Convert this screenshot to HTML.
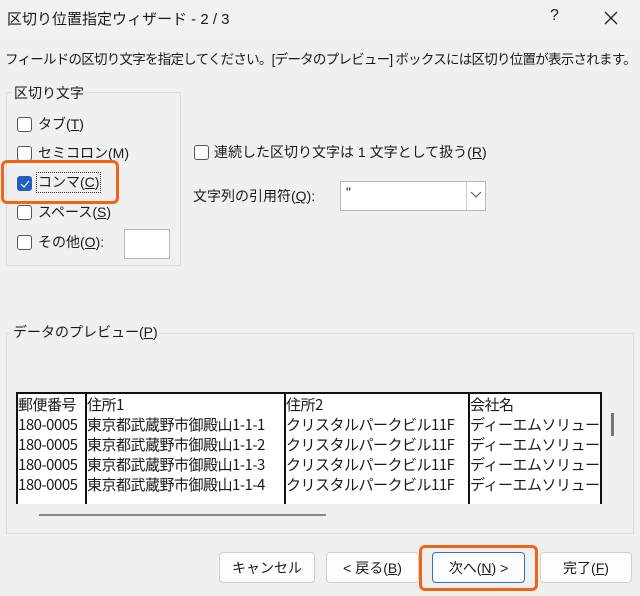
<!DOCTYPE html>
<html><head><meta charset="utf-8"><style>
body{margin:0;width:640px;height:596px;background:#f0f0f0;font-family:"Liberation Sans","Noto Sans CJK JP",sans-serif;font-size:14px;color:#1a1a1a;position:relative;overflow:hidden}
.a{position:absolute;white-space:nowrap}
.cb{position:absolute;width:13px;height:13px;border:1px solid #555;border-radius:3px;background:#fff}
u{text-decoration:underline}
.btn{position:absolute;top:552px;height:31px;border:1px solid #d0d0d0;border-radius:4px;background:#fdfdfd;text-align:center;line-height:31px;font-size:14px;box-sizing:border-box}
.cell{position:absolute;overflow:hidden;white-space:nowrap;font-size:15px;line-height:20px;font-family:"Noto Sans CJK JP",sans-serif;letter-spacing:-0.5px}
.vl{position:absolute;top:392px;width:2px;height:112px;background:#111}
</style></head><body>
<div class="a" style="left:0;top:0;width:640px;height:36px;background:#eef2f5"></div>
<div class="a" style="left:7px;top:8px;font-size:15px">区切り位置指定ウィザード - 2 / 3</div>
<div class="a" style="left:550px;top:7px;font-size:16px">?</div>
<svg class="a" style="left:604px;top:11px" width="14" height="14"><path d="M1 1L13 13M13 1L1 13" stroke="#222" stroke-width="1.3"/></svg>
<div class="a" style="left:5px;top:48px;font-size:13.5px;letter-spacing:-0.75px">フィールドの区切り文字を指定してください。[データのプレビュー] ボックスには区切り位置が表示されます。</div>

<div class="a" style="left:6px;top:92px;width:173px;height:172px;border:1px solid #dcdcdc"></div>
<div class="a" style="left:12px;top:83px;background:#f0f0f0;padding:0 2px">区切り文字</div>
<div class="cb" style="left:17px;top:117px"></div><div class="a" style="left:38px;top:114px">タブ(<u>T</u>)</div>
<div class="cb" style="left:17px;top:146px"></div><div class="a" style="left:38px;top:143px">セミコロン(M)</div>
<div class="cb" style="left:17px;top:176px;background:#1f5fbf;border-color:#1f5fbf"></div>
<svg class="a" style="left:20px;top:180px" width="10" height="8"><path d="M1 4L4 7L9 1" stroke="#fff" stroke-width="1.2" fill="none"/></svg>
<div class="a" style="left:36px;top:172px;border:1px dotted #333;padding:0 1px;line-height:19px">コンマ(<u>C</u>)</div>
<div class="cb" style="left:17px;top:205px"></div><div class="a" style="left:38px;top:202px">スペース(<u>S</u>)</div>
<div class="cb" style="left:17px;top:235px"></div><div class="a" style="left:38px;top:232px">その他(<u>O</u>):</div>
<div class="a" style="left:124px;top:229px;width:44px;height:28px;background:#fff;border:1px solid #b8b8b8"></div>
<div class="a" style="left:1px;top:160px;width:112px;height:38px;border:3px solid #f26414;border-radius:6px"></div>

<div class="cb" style="left:194px;top:145px"></div><div class="a" style="left:214px;top:142px">連続した区切り文字は 1 文字として扱う(<u>R</u>)</div>
<div class="a" style="left:193px;top:186px">文字列の引用符(<u>Q</u>):</div>
<div class="a" style="left:340px;top:181px;width:146px;height:30px;background:#fff;border:1px solid #b8b8b8;box-sizing:border-box"></div>
<div class="a" style="left:346px;top:184px">"</div>
<div class="a" style="left:466px;top:182px;width:1px;height:28px;background:#ccc"></div>
<svg class="a" style="left:470px;top:191px" width="12" height="8"><path d="M1 1L6 6L11 1" stroke="#555" stroke-width="1.1" fill="none"/></svg>

<div class="a" style="left:6px;top:333px;width:626px;height:199px;border:1px solid #dcdcdc"></div>
<div class="a" style="left:11px;top:322px;background:#f0f0f0;padding:0 2px">データのプレビュー(<u>P</u>)</div>
<div class="a" style="left:16px;top:392px;width:586px;height:112px;background:#fff;border-top:2px solid #111;box-sizing:border-box"></div>
<div class="vl" style="left:16px"></div><div class="vl" style="left:85px"></div><div class="vl" style="left:284px"></div><div class="vl" style="left:468px"></div><div class="vl" style="left:600px"></div>
<div class="cell" style="left:18px;top:395px;width:67px">郵便番号<br>180-0005<br>180-0005<br>180-0005<br>180-0005</div>
<div class="cell" style="left:87px;top:395px;width:197px">住所1<br>東京都武蔵野市御殿山1-1-1<br>東京都武蔵野市御殿山1-1-2<br>東京都武蔵野市御殿山1-1-3<br>東京都武蔵野市御殿山1-1-4</div>
<div class="cell" style="left:286px;top:395px;width:182px">住所2<br>クリスタルパークビル11F<br>クリスタルパークビル11F<br>クリスタルパークビル11F<br>クリスタルパークビル11F</div>
<div class="cell" style="left:470px;top:395px;width:130px">会社名<br>ディーエムソリューションズ<br>ディーエムソリューションズ<br>ディーエムソリューションズ<br>ディーエムソリューションズ</div>
<div class="a" style="left:611px;top:413px;width:3px;height:23px;background:#777"></div>
<div class="a" style="left:39px;top:514px;width:287px;height:2px;background:#888"></div>

<div class="btn" style="left:219px;width:96px">キャンセル</div>
<div class="btn" style="left:326px;width:93px">&lt; 戻る(<u>B</u>)</div>
<div class="btn" style="left:432px;width:93px;border:1.5px solid #2f6fcf">次へ(<u>N</u>) &gt;</div>
<div class="btn" style="left:540px;width:92px">完了(<u>F</u>)</div>
<div class="a" style="left:419px;top:545px;width:113px;height:40px;border:3px solid #f26414;border-radius:6px"></div>
</body></html>
